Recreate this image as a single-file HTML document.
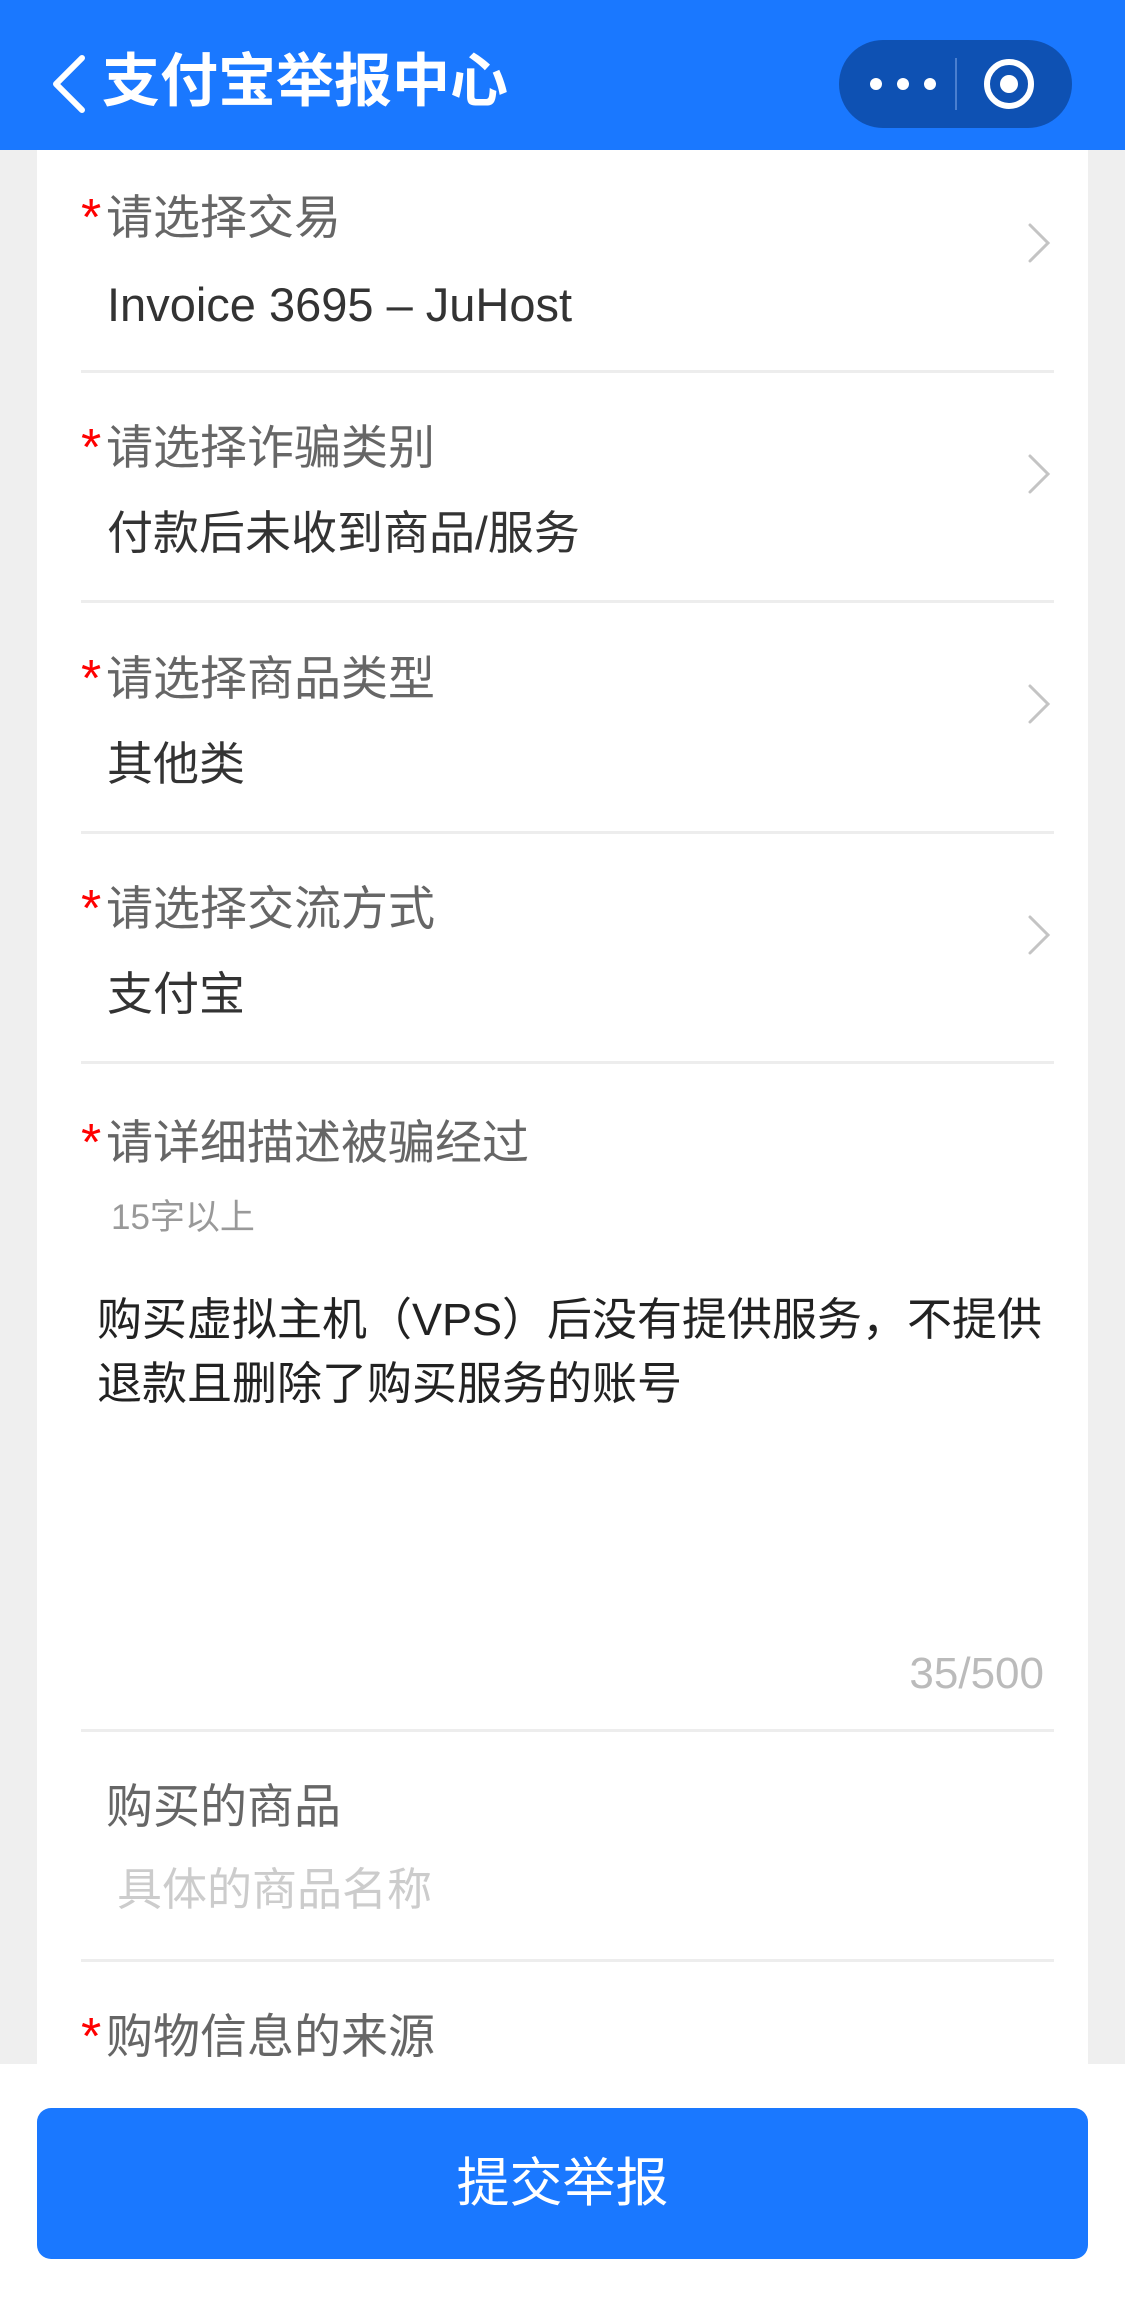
<!DOCTYPE html>
<html><head><meta charset="utf-8"><style>
*{margin:0;padding:0;box-sizing:border-box}
body{width:1125px;height:2304px;background:#efefef;position:relative;overflow:hidden;font-family:"Liberation Sans","Noto Sans CJK SC",sans-serif}
.hdr{position:absolute;left:0;top:0;width:1125px;height:150px;background:#1a78ff}
.title{position:absolute;left:102px;top:47px;font-size:58px;font-weight:bold;color:#fff;line-height:70px}
.cap{position:absolute;left:839px;top:40px;width:233px;height:88px;border-radius:44px;background:#0e51b3}
.card{position:absolute;left:37px;top:150px;width:1051px;height:1914px;background:#fff}
.t{position:absolute;white-space:nowrap;line-height:1}
.lbl{font-size:47px;color:#666}
.lbl b{color:#f00;font-weight:normal;font-size:52px;display:inline-block;width:25px;vertical-align:top;margin-top:-2px}
.val{font-size:46px;color:#333}
.div{position:absolute;left:81px;width:973px;height:3px;background:#ededed}
.bot{position:absolute;left:0;top:2064px;width:1125px;height:240px;background:#fff}
.btn{position:absolute;left:37px;top:2108px;width:1051px;height:151px;border-radius:14px;background:#1a78ff;color:#fff;font-size:53px;text-align:center;line-height:151px}
</style></head><body>
<div class="hdr">
<svg style="position:absolute;left:48px;top:54px" width="40" height="60" viewBox="0 0 40 60"><path d="M34 4 L8 30 L34 56" fill="none" stroke="#fff" stroke-width="6" stroke-linecap="round" stroke-linejoin="round"/></svg>
<div class="title">支付宝举报中心</div>
<div class="cap">
<svg style="position:absolute;left:0;top:0" width="233" height="88" viewBox="0 0 233 88">
<circle cx="37" cy="44" r="6" fill="#fff"/><circle cx="64" cy="44" r="6" fill="#fff"/><circle cx="91" cy="44" r="6" fill="#fff"/>
<line x1="117" y1="18" x2="117" y2="70" stroke="#4a7fd0" stroke-width="2"/>
<circle cx="170" cy="44" r="22" fill="none" stroke="#fff" stroke-width="6"/><circle cx="170" cy="44" r="9" fill="#fff"/>
</svg></div>
</div>
<div class="card"></div>

<div class="t lbl" style="left:81px;top:194px"><b>*</b>请选择交易</div>
<div class="t val" style="left:107px;top:281px;font-size:47px">Invoice 3695 – JuHost</div>
<div class="div" style="top:370px"></div>
<div class="t lbl" style="left:81px;top:424px"><b>*</b>请选择诈骗类别</div>
<div class="t val" style="left:107px;top:510px">付款后未收到商品/服务</div>
<div class="div" style="top:600px"></div>
<div class="t lbl" style="left:81px;top:655px"><b>*</b>请选择商品类型</div>
<div class="t val" style="left:107px;top:741px">其他类</div>
<div class="div" style="top:831px"></div>
<div class="t lbl" style="left:81px;top:885px"><b>*</b>请选择交流方式</div>
<div class="t val" style="left:107px;top:971px">支付宝</div>
<div class="div" style="top:1061px"></div>

<svg style="position:absolute;left:1024px;top:0" width="30" height="1000" viewBox="0 0 30 1000">
<g fill="none" stroke="#c4c4c4" stroke-width="3" stroke-linecap="round">
<path d="M6 225 L24 243 L6 261"/>
<path d="M6 456 L24 474 L6 492"/>
<path d="M6 686 L24 704 L6 722"/>
<path d="M6 917 L24 935 L6 953"/>
</g></svg>

<div class="t lbl" style="left:81px;top:1119px"><b>*</b>请详细描述被骗经过</div>
<div class="t" style="left:111px;top:1200px;font-size:35px;color:#999">15字以上</div>
<div class="t" style="left:97px;top:1288px;font-size:45px;color:#222;line-height:64px">购买虚拟主机（VPS）后没有提供服务，不提供<br>退款且删除了购买服务的账号</div>
<div class="t" style="right:81px;top:1652px;font-size:44px;color:#bbb">35/500</div>
<div class="div" style="top:1729px"></div>
<div class="t lbl" style="left:106px;top:1783px">购买的商品</div>
<div class="t" style="left:117px;top:1867px;font-size:45px;color:#ccc">具体的商品名称</div>
<div class="div" style="top:1959px"></div>
<div class="t lbl" style="left:81px;top:2013px"><b>*</b>购物信息的来源</div>

<div class="bot"></div>
<div class="btn">提交举报</div>
</body></html>
